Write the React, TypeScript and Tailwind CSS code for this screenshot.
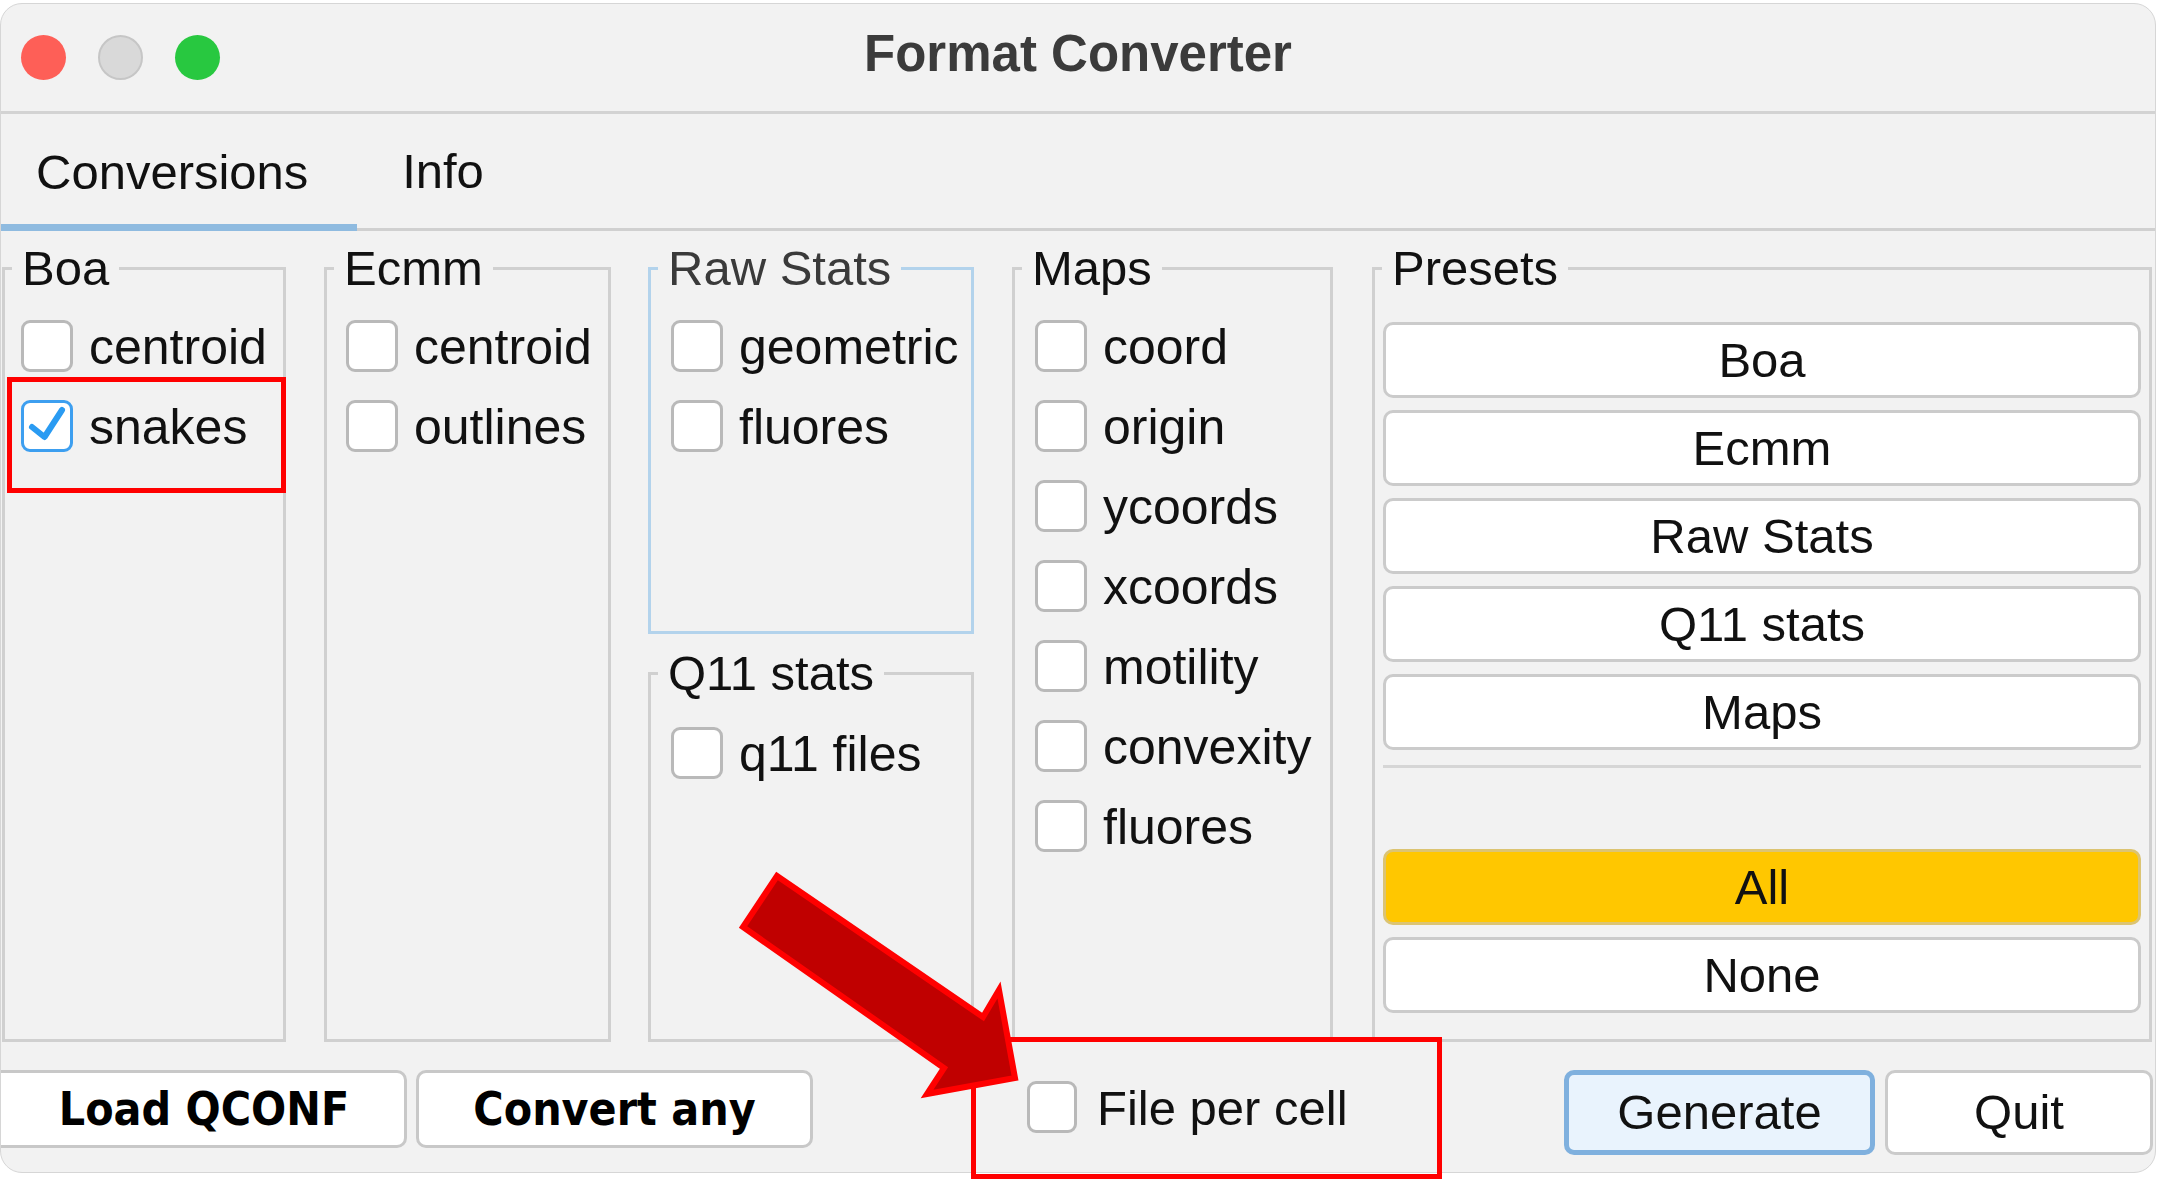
import React from 'react';
import clsx from 'clsx';

type CheckProps = {
    label: string;
    checked?: boolean;
};

const Check = ({ label, checked }: CheckProps) => (
    <label className="flex h-[52px] items-center gap-[16px] whitespace-nowrap text-[50px] leading-none text-[#111]">
        <span
            className={clsx(
                'flex h-[52px] w-[52px] shrink-0 items-center justify-center rounded-[9px] border-[3px] bg-white',
                checked ? 'border-[#3d9ff0]' : 'border-[#b9b9b9]'
            )}
        >
            {checked && (
                <svg width="46" height="46" viewBox="0 0 46 46" fill="none">
                    <path d="M8 24 L20.5 34 L38 7" stroke="#2a9bf2" strokeWidth="6" strokeLinecap="round" strokeLinejoin="round" />
                </svg>
            )}
        </span>
        <span className="pt-[2px]">{label}</span>
    </label>
);

type GroupProps = {
    title: string;
    focused?: boolean;
    className?: string;
    children?: React.ReactNode;
};

const Group = ({ title, focused, className, children }: GroupProps) => (
    <fieldset className={clsx('border-[3px]', focused ? 'border-[#b3d3ec]' : 'border-[#d0d0d0]', className)}>
        <legend
            className={clsx(
                'ml-[7px] px-[10px] text-[49px] leading-[56px]',
                focused ? 'text-[#3a3a3a]' : 'text-[#111]'
            )}
        >
            {title}
        </legend>
        {children}
    </fieldset>
);

const PresetButton = ({ label, active }: { label: string; active?: boolean }) => (
    <button
        type="button"
        className={clsx(
            'h-[76px] w-full rounded-[10px] border-[3px] text-[49px] leading-none text-[#111]',
            active ? 'border-[#dcc472] bg-[#ffc700]' : 'border-[#cbcbcb] bg-white'
        )}
    >
        {label}
    </button>
);

const boaItems = [
    { label: 'centroid' },
    { label: 'snakes', checked: true },
];
const ecmmItems = ['centroid', 'outlines'];
const rawItems = ['geometric', 'fluores'];
const mapItems = ['coord', 'origin', 'ycoords', 'xcoords', 'motility', 'convexity', 'fluores'];
const presets = ['Boa', 'Ecmm', 'Raw Stats', 'Q11 stats', 'Maps'];

export default function App() {
    return (
        <div className="relative h-[1182px] w-[2158px] overflow-hidden bg-white font-['Liberation_Sans',Arial,sans-serif]">
            <div className="mt-[3px] flex h-[1170px] w-[2156px] flex-col overflow-hidden rounded-[22px] border border-[#d6d6d6] bg-[#f2f2f2]">
                {/* title bar */}
                <div className="grid h-[110px] shrink-0 grid-cols-[1fr_auto_1fr] items-center border-b-[3px] border-[#d3d3d3]">
                    <div className="flex items-center gap-[32px] pl-[20px]">
                        <span className="h-[45px] w-[45px] rounded-full bg-[#fe5f57]" />
                        <span className="h-[45px] w-[45px] rounded-full border-2 border-[#c6c6c6] bg-[#d9d9d9]" />
                        <span className="h-[45px] w-[45px] rounded-full bg-[#28c840]" />
                    </div>
                    <div className="pb-[6px] text-[51px] font-bold text-[#3b3b3b]">Format Converter</div>
                    <div />
                </div>

                {/* tabs */}
                <div className="flex h-[117px] shrink-0 items-stretch border-b-[3px] border-[#d0d0d0]">
                    <div className="-mb-[3px] flex w-[356px] items-center border-b-[7px] border-[#8fbbe0] pl-[35px] pt-[8px] text-[49px] text-[#111]">
                        Conversions
                    </div>
                    <div className="flex w-[172px] items-center justify-center pt-[2px] text-[49px] text-[#111]">Info</div>
                </div>

                {/* groups */}
                <div className="flex h-[811px] shrink-0 items-start pl-[1px] pt-[9px]">
                    <Group title="Boa" className="h-[802px] w-[284px]">
                        <div className="flex flex-col gap-[28px] pl-[16px] pt-[24px]">
                            {boaItems.map((item) => (
                                <Check key={item.label} label={item.label} checked={item.checked} />
                            ))}
                        </div>
                    </Group>
                    <Group title="Ecmm" className="ml-[38px] h-[802px] w-[287px]">
                        <div className="flex flex-col gap-[28px] pl-[19px] pt-[24px]">
                            {ecmmItems.map((label) => (
                                <Check key={label} label={label} />
                            ))}
                        </div>
                    </Group>
                    <div className="ml-[37px] flex h-[802px] w-[326px] flex-col gap-[11px]">
                        <Group title="Raw Stats" focused className="h-[394px]">
                            <div className="flex flex-col gap-[28px] pl-[20px] pt-[24px]">
                                {rawItems.map((label) => (
                                    <Check key={label} label={label} />
                                ))}
                            </div>
                        </Group>
                        <Group title="Q11 stats" className="h-[397px]">
                            <div className="flex flex-col gap-[28px] pl-[20px] pt-[26px]">
                                <Check label="q11 files" />
                            </div>
                        </Group>
                    </div>
                    <Group title="Maps" className="ml-[38px] h-[802px] w-[321px]">
                        <div className="flex flex-col gap-[28px] pl-[20px] pt-[24px]">
                            {mapItems.map((label, idx) => (
                                <Check key={`${label}-${idx}`} label={label} />
                            ))}
                        </div>
                    </Group>
                    <Group title="Presets" className="ml-[39px] h-[802px] w-[780px]">
                        <div className="flex h-[743px] flex-col px-[8px] pb-[26px] pt-[26px]">
                            <div className="flex flex-col gap-[12px]">
                                {presets.map((label) => (
                                    <PresetButton key={label} label={label} />
                                ))}
                            </div>
                            <div className="mt-[15px] h-[3px] bg-[#d6d6d6]" />
                            <div className="flex-1" />
                            <div className="flex flex-col gap-[12px]">
                                <PresetButton label="All" active />
                                <PresetButton label="None" />
                            </div>
                        </div>
                    </Group>
                </div>

                {/* bottom bar */}
                <div className="mt-[28px] flex items-start">
                    <button
                        type="button"
                        className="-ml-[12px] h-[78px] w-[418px] rounded-[10px] border-[3px] border-[#c8c8c8] bg-white pl-[12px] font-['DejaVu_Sans_Condensed','DejaVu_Sans',sans-serif] text-[46px] font-bold leading-none text-black"
                    >
                        Load QCONF
                    </button>
                    <button
                        type="button"
                        className="ml-[9px] h-[78px] w-[397px] rounded-[10px] border-[3px] border-[#c8c8c8] bg-white font-['DejaVu_Sans_Condensed','DejaVu_Sans',sans-serif] text-[46px] font-bold leading-none text-black"
                    >
                        Convert any
                    </button>
                    <div className="ml-[214px] mt-[11px] flex items-center gap-[20px]">
                        <span className="h-[52px] w-[50px] rounded-[9px] border-[3px] border-[#b9b9b9] bg-white" />
                        <span className="pt-[2px] text-[49px] leading-none text-[#111]">File per cell</span>
                    </div>
                    <div className="flex-1" />
                    <button
                        type="button"
                        className="h-[85px] w-[311px] rounded-[10px] border-[5px] border-[#7fb0de] bg-[#e9f3fd] text-[49px] leading-none text-[#111]"
                    >
                        Generate
                    </button>
                    <button
                        type="button"
                        className="ml-[10px] mr-[2px] h-[85px] w-[268px] rounded-[10px] border-[3px] border-[#cbcbcb] bg-white text-[49px] leading-none text-[#111]"
                    >
                        Quit
                    </button>
                </div>
            </div>

            {/* annotations */}
            <div className="pointer-events-none absolute left-[7px] top-[377px] h-[116px] w-[279px] border-[5px] border-[#ff0000]" />
            <div className="pointer-events-none absolute left-[971px] top-[1037px] h-[142px] w-[471px] border-[5px] border-[#ff0000]" />
            <svg className="pointer-events-none absolute left-0 top-0" width="2158" height="1182" viewBox="0 0 2158 1182">
                <polygon
                    points="777,876 743,927 944,1068 927,1094 1015,1078 999,990 983,1017"
                    fill="#c00000"
                    stroke="#ff0000"
                    strokeWidth="6"
                    strokeLinejoin="miter"
                />
            </svg>
        </div>
    );
}
